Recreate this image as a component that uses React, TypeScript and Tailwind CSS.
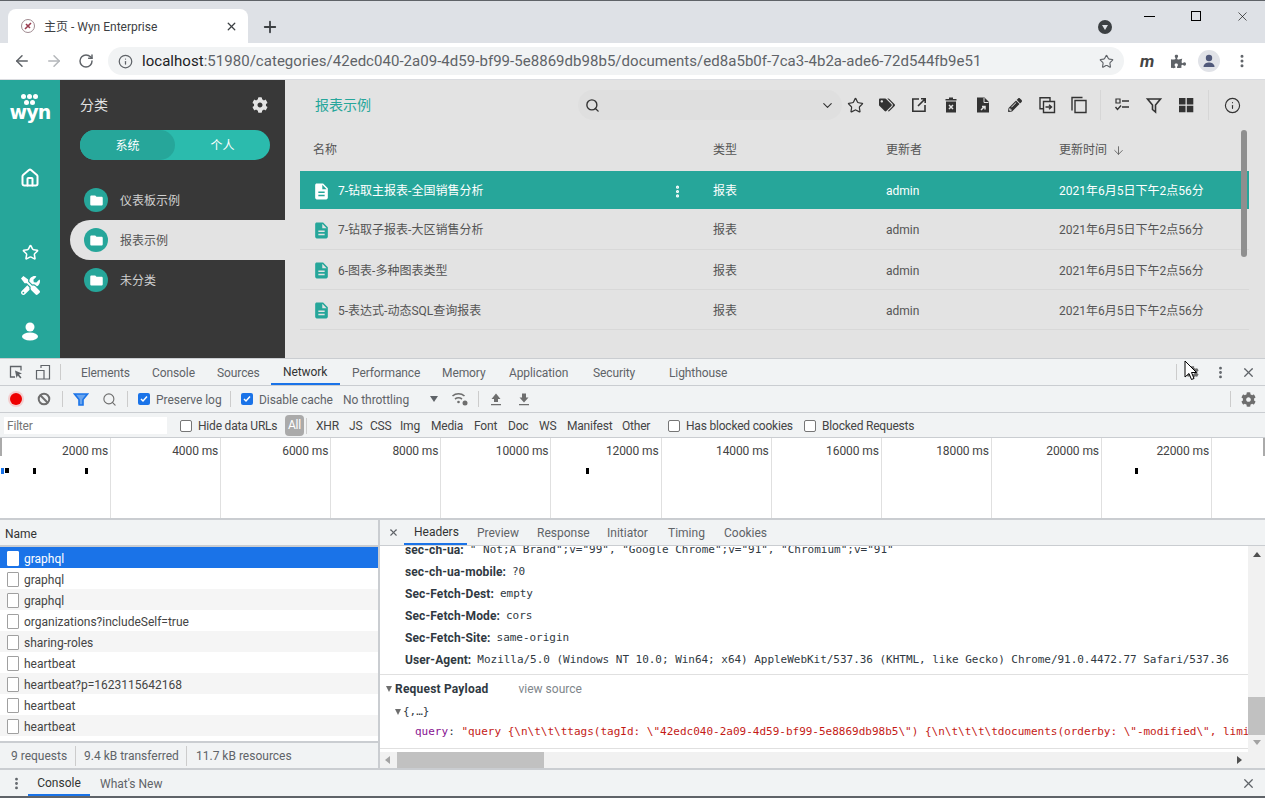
import React from 'react';
import { ArrowDown, ArrowLeft, ArrowRight, ChevronDown, Home, Info, MoreVertical, Plus, RotateCw, Search, Star, X } from 'lucide-react';
import { FaCog, FaPencilAlt, FaPuzzlePiece, FaTags, FaTools } from 'react-icons/fa';
import { MdDescription, MdFolder } from 'react-icons/md';

const SANS = 'font-["Roboto","Noto_Sans_CJK_SC",sans-serif]';
const MONO = 'font-["DejaVu_Sans_Mono",monospace]';

const DOCS = ['7-钻取主报表-全国销售分析', '7-钻取子报表-大区销售分析', '6-图表-多种图表类型', '5-表达式-动态SQL查询报表'];
const FOLDERS = ['仪表板示例', '报表示例', '未分类'];
const DEV_TABS: [string, number][] = [['Elements', 71], ['Console', 65], ['Sources', 66], ['Network', 69], ['Performance', 90], ['Memory', 67], ['Application', 84], ['Security', 76], ['Lighthouse', 90]];
const FILTERS: [string, number][] = [['XHR', 33], ['JS', 21], ['CSS', 30], ['Img', 31], ['Media', 43], ['Font', 34], ['Doc', 31], ['WS', 28], ['Manifest', 55], ['Other', 46]];
const REQUESTS = ['graphql', 'graphql', 'graphql', 'organizations?includeSelf=true', 'sharing-roles', 'heartbeat', 'heartbeat?p=1623115642168', 'heartbeat', 'heartbeat'];
const TIMES = ['2000', '4000', '6000', '8000', '10000', '12000', '14000', '16000', '18000', '20000', '22000'];
const DETAIL_TABS: [string, number][] = [['Headers', 63], ['Preview', 60], ['Response', 70], ['Initiator', 61], ['Timing', 56], ['Cookies', 60]];
const HEADERS: [string, string][] = [
  ['sec-ch-ua-mobile:', '?0'],
  ['Sec-Fetch-Dest:', 'empty'],
  ['Sec-Fetch-Mode:', 'cors'],
  ['Sec-Fetch-Site:', 'same-origin'],
  ['User-Agent:', 'Mozilla/5.0 (Windows NT 10.0; Win64; x64) AppleWebKit/537.36 (KHTML, like Gecko) Chrome/91.0.4472.77 Safari/537.36'],
];

function Glyph({ children, size = 18 }: { children: React.ReactNode; size?: number }) {
  return (
    <svg width={size} height={size} viewBox="0 0 18 18" className="shrink-0">
      {children}
    </svg>
  );
}

function IconBox({ children }: { children: React.ReactNode }) {
  return <span className="w-[32px] flex justify-center items-center shrink-0">{children}</span>;
}

function Checkbox({ on }: { on?: boolean }) {
  if (on) {
    return (
      <span className="w-3 h-3 rounded-[2px] bg-[#1a73e8] flex items-center justify-center shrink-0">
        <svg width="10" height="10" viewBox="0 0 10 10"><path d="M2 5l2 2 4-4.5" fill="none" stroke="#fff" strokeWidth="1.5" /></svg>
      </span>
    );
  }
  return <span className="block w-3 h-3 rounded-[2px] border border-[#767676] bg-white shrink-0" />;
}

function Sep() {
  return <span className="block w-px h-4 bg-[#ccc] shrink-0" />;
}

function TopBar() {
  return (
    <div className="shrink-0 border-t border-[#5f6368]">
      <div className="h-[42px] bg-[#dee1e6] flex items-end pl-[8px] relative">
        <div className="w-[240px] h-[34px] bg-white rounded-t-lg flex items-center pl-[12px] pr-[10px] text-[12px] text-[#3c4043]">
          <svg width="16" height="16" viewBox="0 0 16 16" className="shrink-0">
            <circle cx="8" cy="8" r="6.5" fill="none" stroke="#a08a90" strokeWidth="1" />
            <path d="M5 11l6-6M6 6l4 4" stroke="#9a3c50" strokeWidth="1.6" />
          </svg>
          <span className="ml-[8px] pt-[1px] flex-1">主页 - Wyn Enterprise</span>
          <X size={13} strokeWidth={2.4} className="text-[#3c4043]" />
        </div>
        <Plus size={18} strokeWidth={2.4} className="text-[#3c4043] ml-[13px] mb-[7px]" />
        <div className="flex-1" />
        <div className="w-[14px] h-[14px] rounded-full bg-[#3c4043] flex items-center justify-center mb-[9px] mr-[153px]">
          <span className="border-x-[3.5px] border-x-transparent border-t-[5px] border-t-[#dee1e6]" />
        </div>
        <div className="absolute right-0 top-0 h-[30px] flex items-center text-black">
          <span className="w-[46px] flex justify-center"><span className="w-[11px] h-px bg-black" /></span>
          <span className="w-[47px] flex justify-center"><span className="w-[10px] h-[10px] border border-black" /></span>
          <span className="w-[46px] flex justify-center"><X size={15} strokeWidth={1} /></span>
        </div>
      </div>
      <div className="h-[36px] bg-white flex items-center border-b border-[#dadce0] box-content">
        <ArrowLeft size={18} strokeWidth={2} className="text-[#5f6368] ml-[13px]" />
        <ArrowRight size={18} strokeWidth={2} className="text-[#b4b7ba] ml-[14px]" />
        <RotateCw size={16} strokeWidth={2.2} className="text-[#5f6368] ml-[15px]" />
        <div className="ml-[14px] w-[1016px] h-[28px] bg-[#f1f3f4] rounded-full flex items-center pl-[10px] pr-[10px]">
          <Info size={15} className="text-[#5f6368]" />
          <span className="ml-[9px] text-[15px] text-[#5f6368] whitespace-nowrap tracking-[0.035px]"><span className="text-[#202124]">localhost</span>:51980/categories/42edc040-2a09-4d59-bf99-5e8869db98b5/documents/ed8a5b0f-7ca3-4b2a-ade6-72d544fb9e51</span>
          <div className="flex-1" />
          <Star size={15} strokeWidth={1.8} className="text-[#5f6368]" />
        </div>
        <span className="ml-[16px] w-[16px] text-[17px] font-bold italic text-[#444] leading-none">m</span>
        <FaPuzzlePiece size={15} className="text-[#5f6368] ml-[15px]" />
        <span className="ml-[12px] w-[22px] h-[22px] rounded-full bg-[#e1e3e8] flex items-end justify-center">
          <svg width="16" height="16" viewBox="0 0 16 16" className="mb-[3px]"><circle cx="8" cy="5" r="3.2" fill="#50597a" /><path d="M2.5 14c0-3 3-4.4 5.5-4.4s5.500 1.400 5.500 4.400z" fill="#50597a" /></svg>
        </span>
        <MoreVertical size={16} strokeWidth={2.5} className="text-[#5f6368] ml-[14px]" />
      </div>
    </div>
  );
}

function Rail() {
  return (
    <div className="w-[60px] bg-[#26a69a] flex flex-col items-center text-white shrink-0">
      <div className="mt-[14px] flex flex-col items-center h-[30px]">
        <div className="flex gap-[1px]">
          <span className="w-[5px] h-[5px] rounded-full bg-white" />
          <span className="w-[5px] h-[5px] rounded-full bg-white" />
          <span className="w-[5px] h-[5px] rounded-full bg-white" />
        </div>
        <div className="flex gap-[1px] mt-[1px]">
          <span className="w-[5px] h-[5px] rounded-full bg-white" />
          <span className="w-[5px] h-[5px] rounded-full bg-white" />
        </div>
        <span className="font-['DejaVu_Sans'] font-bold text-[19px] leading-[15px] tracking-[-0.8px]">wyn</span>
      </div>
      <Home size={20} strokeWidth={2.4} className="mt-[44px]" />
      <Star size={17} strokeWidth={2.2} className="mt-[56px]" />
      <FaTools size={19} className="mt-[15px]" />
      <svg width="20" height="20" viewBox="0 0 20 20" className="mt-[26px]"><circle cx="10" cy="6" r="4.500" fill="#fff" /><ellipse cx="10" cy="15.500" rx="8" ry="4" fill="#fff" /></svg>
    </div>
  );
}

function Sidebar() {
  return (
    <div className="w-[225px] bg-[#383838] shrink-0 flex flex-col">
      <div className="h-[50px] pl-[20px] pr-[17px] flex items-center justify-between text-[#e3e3e3] text-[14px]">
        <span>分类</span>
        <FaCog size={16} className="text-[#e3e3e3]" />
      </div>
      <div className="ml-[20px] w-[190px] h-[30px] rounded-full bg-[#2bbbad] flex text-white text-[12px] leading-[32px] text-center">
        <span className="w-[95px] rounded-full bg-[#26a69a]">系统</span>
        <span className="w-[95px]">个人</span>
      </div>
      <div className="mt-[20px] flex flex-col">
        {FOLDERS.map((f, i) => (
          <div key={f} className={`ml-[10px] h-[40px] flex items-center pl-[14px] rounded-l-full text-[12px] ${i === 1 ? 'bg-[#e3e3e3] text-[#555]' : 'text-[#d0d0d0]'}`}>
            <span className="w-[24px] h-[24px] rounded-full bg-[#26a69a] flex items-center justify-center">
              <MdFolder size={15} className="text-white" />
            </span>
            <span className="ml-[12px] pt-[1px]">{f}</span>
          </div>
        ))}
      </div>
    </div>
  );
}

function AppToolbar() {
  const c = '#333';
  return (
    <div className="h-[50px] flex items-center text-[#333]">
      <span className="ml-[30px] w-[263px] text-[14px] text-[#26a69a]">报表示例</span>
      <div className="w-[264px] h-[30px] rounded-full bg-[#dfdfdf] flex items-center pl-[7px] pr-[7px] justify-between">
        <Search size={15} strokeWidth={2.2} className="text-[#333]" />
        <ChevronDown size={15} strokeWidth={1.8} className="text-[#333]" />
      </div>
      <div className="-ml-[3px] flex items-center">
        <IconBox><Star size={17} strokeWidth={1.7} /></IconBox>
        <IconBox><FaTags size={16} color={c} /></IconBox>
        <IconBox><Glyph><path d="M9 3H2.800v12.200H15V9M8 10l7-7M11 2.800h4.200V7" fill="none" stroke={c} strokeWidth="1.600" /></Glyph></IconBox>
        <IconBox><Glyph><path d="M7 1.500h4v1.500h3.500v1.500h-11V3H7zM4 5.500h10v11H4z" fill={c} /><path d="M7 9l4 4M11 9l-4 4" stroke="#e3e3e3" strokeWidth="1.500" /></Glyph></IconBox>
        <IconBox><Glyph><path d="M3 1.500h7.500L15 6v10.500H3z" fill={c} /><path d="M10 2v4.500h4.500" fill="none" stroke="#e3e3e3" /><path d="M7 14l3.500-3.500M8 10.500h3v3" fill="none" stroke="#e3e3e3" strokeWidth="1.500" /></Glyph></IconBox>
        <IconBox><FaPencilAlt size={14} color={c} /></IconBox>
        <IconBox><Glyph><path d="M12 5V1.800H2v11h3M5.500 5.500h11v11h-11zM7.500 11h6M11 8.800l2.500 2.200-2.500 2.200" fill="none" stroke={c} strokeWidth="1.400" /></Glyph></IconBox>
        <IconBox><Glyph><path d="M12.500 1.500H2v13" fill="none" stroke={c} strokeWidth="1.400" /><path d="M5 4.500h11v12H5z" fill="none" stroke={c} strokeWidth="1.400" /></Glyph></IconBox>
      </div>
      <span className="ml-[5px] w-px h-[30px] bg-[#d6d6d6]" />
      <div className="ml-[5px] flex items-center">
        <IconBox><Glyph><path d="M3 3h4v4H3z" fill="none" stroke={c} strokeWidth="1.200" /><path d="M9 5h7M9 11h7M2.500 11l2 2.500L8 9.500" fill="none" stroke={c} strokeWidth="1.400" /></Glyph></IconBox>
        <IconBox><Glyph><path d="M2.500 3h13L10.500 9v7L7.500 13.500V9z" fill="none" stroke={c} strokeWidth="1.600" /></Glyph></IconBox>
        <IconBox><Glyph><path d="M2 2h6.500v6.500H2zM9.800 2h6.500v6.500H9.800zM2 9.800h6.500v6.500H2zM9.800 9.800h6.500v6.500H9.800z" fill={c} /></Glyph></IconBox>
      </div>
      <span className="ml-[6px] w-px h-[30px] bg-[#d6d6d6]" />
      <Info size={17} strokeWidth={1.6} className="ml-[15px]" />
    </div>
  );
}

function DocTable() {
  return (
    <div className="ml-[15px] w-[949px] text-[12px] text-[#555]">
      <div className="h-[40px] grid grid-cols-[413px_173px_173px_190px] items-center">
        <span className="pl-[13px]">名称</span>
        <span>类型</span>
        <span>更新者</span>
        <span className="flex items-center gap-[5px]">更新时间 <ArrowDown size={13} strokeWidth={1.5} /></span>
      </div>
      {DOCS.map((d, i) => (
        <div key={d} className={`grid grid-cols-[413px_173px_173px_190px] items-center pt-[2px] ${i === 0 ? 'bg-[#26a69a] text-white h-[38px] mt-[1px]' : i === 1 ? 'h-[41px] border-b border-[#d8d8d8]' : 'h-[40px] border-b border-[#d8d8d8]'}`}>
          <span className="flex items-center pl-[12px]">
            <MdDescription size={19} className={i === 0 ? 'text-white' : 'text-[#26a69a]'} />
            <span className="ml-[7px] flex-1">{d}</span>
            {i === 0 && <MoreVertical size={15} strokeWidth={3} className="mr-[28px]" />}
          </span>
          <span>报表</span>
          <span>admin</span>
          <span>2021年6月5日下午2点56分</span>
        </div>
      ))}
    </div>
  );
}

function DevTabs() {
  return (
    <div className="h-[27px] bg-[#f1f3f4] border-b border-[#cacdd1] flex items-center text-[12px] text-[#5f6368] tracking-[-0.1px] relative">
      <svg width="16" height="16" viewBox="0 0 16 16" className="ml-[8px]"><path d="M7 13H2.500V2.500h10.500V6.500" fill="none" stroke="#5f6368" strokeWidth="1.300" /><path d="M7 6.500l7 3-3 1 2.500 3-1.200 1-2.500-3-1.300 2.500z" fill="#5f6368" /></svg>
      <svg width="16" height="16" viewBox="0 0 16 16" className="ml-[11px]"><path d="M6 4V1.500h8.500V15H6M1.500 6.500H9V15H1.500z" fill="none" stroke="#5f6368" strokeWidth="1.200" /></svg>
      <span className="w-px h-4 bg-[#ccc] ml-[9px] mr-[8px]" />
      {DEV_TABS.map(([t, w]) => (
        <span key={t} style={{ width: w }} className={`h-full flex items-center pl-3 pt-[2px] shrink-0 ${t === 'Network' ? 'text-[#333] border-b-2 border-[#1a73e8]' : ''}`}>{t}</span>
      ))}
      <div className="flex-1" />
      <Sep />
      <FaCog size={13} className="ml-[9px] text-[#6e6e6e]" />
      <MoreVertical size={15} strokeWidth={2.5} className="ml-[14px]" />
      <X size={15} strokeWidth={2} className="ml-[13px] mr-[9px]" />
    </div>
  );
}

function NetToolbar() {
  return (
    <div className="h-[27px] bg-[#f1f3f4] border-b border-[#cacdd1] flex items-center text-[12px] text-[#5f6368] tracking-[-0.05px]">
      <span className="ml-[10px] w-[12px] h-[12px] rounded-full bg-[#e00] ring-2 ring-[#f5b5b5]/60" />
      <svg width="14" height="14" viewBox="0 0 14 14" className="ml-[15px]"><circle cx="7" cy="7" r="5.300" fill="none" stroke="#6e6e6e" strokeWidth="2" /><path d="M3.300 3.300l7.400 7.400" stroke="#6e6e6e" strokeWidth="2" /></svg>
      <span className="ml-[11px]"><Sep /></span>
      <svg width="16" height="16" viewBox="0 0 16 16" className="ml-[10px]"><path d="M1.500 3h13L10 8.500V14l-4-0V8.500z" fill="#6aa5ee" stroke="#1a73e8" strokeWidth="1.600" /></svg>
      <Search size={15} strokeWidth={1.8} className="ml-[13px] text-[#6e6e6e]" />
      <span className="ml-[10px]"><Sep /></span>
      <span className="ml-[10px]"><Checkbox on /></span>
      <span className="ml-[6px] pt-[1px] w-[74px]">Preserve log</span>
      <Sep />
      <span className="ml-[10px]"><Checkbox on /></span>
      <span className="ml-[6px] pt-[1px] w-[84px]">Disable cache</span>
      <span className="w-[87px] pt-[1px]">No throttling</span>
      <span className="border-x-[4px] border-x-transparent border-t-[6px] border-t-[#5f6368]" />
      <svg width="18" height="16" viewBox="0 0 18 16" className="ml-[13px]"><path d="M1.500 5a9 9 0 0 1 12 0M4 8a6 6 0 0 1 7 0" fill="none" stroke="#6e6e6e" strokeWidth="1.600" /><circle cx="7.500" cy="11" r="1.300" fill="#6e6e6e" /><circle cx="14" cy="12" r="2.500" fill="#6e6e6e" /></svg>
      <span className="ml-[9px]"><Sep /></span>
      <svg width="14" height="14" viewBox="0 0 14 14" className="ml-[10px]"><path d="M7 1.500L11.500 7H9v3H5V7H2.500zM2 12h10v1.200H2z" fill="#6e6e6e" /></svg>
      <svg width="14" height="14" viewBox="0 0 14 14" className="ml-[14px]"><path d="M7 10.500L2.500 5.500H5V1.500h4v4h2.500zM2 12h10v1.200H2z" fill="#6e6e6e" /></svg>
      <div className="flex-1" />
      <Sep />
      <FaCog size={15} className="ml-[10px] mr-[9px] text-[#6e6e6e]" />
    </div>
  );
}

function FilterBar() {
  return (
    <div className="h-[25px] bg-[#f1f3f4] border-b border-[#cacdd1] flex items-center text-[12px] text-[#444] whitespace-nowrap tracking-[-0.2px] pt-[1px]">
      <span className="ml-[4px] w-[163px] h-[17px] bg-white pl-[3px] leading-[18px] text-[#757575]">Filter</span>
      <span className="ml-[13px]"><Checkbox /></span>
      <span className="ml-[6px] w-[87px]">Hide data URLs</span>
      <span className="w-[19px] h-[21px] rounded-[4px] bg-[#aaa] text-white text-center leading-[21px] mr-[2px]">All</span>
      <span className="w-px h-4 bg-[#ccc] mr-[9px]" />
      {FILTERS.map(([t, w]) => (
        <span key={t} style={{ width: w }} className="shrink-0">{t}</span>
      ))}
      <Checkbox />
      <span className="ml-[6px] w-[118px]">Has blocked cookies</span>
      <Checkbox />
      <span className="ml-[6px]">Blocked Requests</span>
    </div>
  );
}

function Overview() {
  return (
    <div className="h-[82px] bg-white border-b-2 border-[#cacdd1] flex pl-[1px] relative text-[12px] text-[#444]">
      {TIMES.map(t => (
        <div key={t} className="w-[110.100px] shrink-0 border-r border-[#e0e0e0] text-right pr-[2px] pt-[5px] leading-[16px] tracking-[-0.1px]">{t} ms</div>
      ))}
      <span className="absolute left-0 top-0 w-[2px] h-[18px] bg-[#aaa]" />
      <span className="absolute right-0 top-0 w-[2px] h-[18px] bg-[#aaa]" />
      <span className="absolute left-[1px] top-[30px] w-[3px] h-[6px] bg-[#1a73e8]" />
      <span className="absolute left-[5px] top-[30px] w-[4px] h-[5px] bg-black" />
      {[33, 85, 586, 1135].map(x => (
        <span key={x} style={{ left: x }} className="absolute top-[30px] w-[3px] h-[6px] bg-black" />
      ))}
    </div>
  );
}

function RequestList() {
  return (
    <div className="w-[380px] shrink-0 border-r-2 border-[#cacdd1] flex flex-col text-[12px] text-[#444]">
      <div className="h-[27px] bg-[#f1f3f4] border-b-2 border-[#cacdd1] pl-[5px] pt-[2px] flex items-center text-[#333] shrink-0">Name</div>
      <div className="flex-1 bg-white">
        {REQUESTS.map((r, i) => (
          <div key={i} className={`h-[21px] flex items-center pl-[7px] pt-[1px] ${i === 0 ? 'bg-[#1a73e8] text-white' : i % 2 === 0 ? 'bg-[#f5f5f5]' : 'bg-white'}`}>
            <span className={`w-[12px] h-[15px] border rounded-[1px] shrink-0 ${i === 0 ? 'bg-white border-white' : 'bg-white border-[#a0a0a0]'}`} />
            <span className="ml-[5px] pt-[1px]">{r}</span>
          </div>
        ))}
      </div>
      <div className="h-[27px] bg-[#f1f3f4] border-t-2 border-[#cacdd1] flex items-center text-[#5f6368] shrink-0">
        <span className="ml-[11px] w-[64px]">9 requests</span>
        <span className="w-px h-5 bg-[#ccc]" />
        <span className="ml-[8px] w-[102px]">9.4 kB transferred</span>
        <span className="w-px h-5 bg-[#ccc]" />
        <span className="ml-[9px]">11.7 kB resources</span>
      </div>
    </div>
  );
}

function DetailPanel() {
  return (
    <div className="flex-1 min-w-0 flex flex-col text-[12px]">
      <div className="h-[26px] bg-[#f1f3f4] border-b border-[#cacdd1] flex items-center text-[#5f6368] shrink-0">
        <X size={11} strokeWidth={2.4} className="ml-[8px] mr-[5px]" />
        {DETAIL_TABS.map(([t, w]) => (
          <span key={t} style={{ width: w }} className={`h-full flex items-center pl-[10px] pt-[1px] shrink-0 ${t === 'Headers' ? 'text-[#333] border-b-2 border-[#1a73e8]' : ''}`}>{t}</span>
        ))}
      </div>
      <div className="flex-1 min-h-0 flex">
        <div className="w-[868px] bg-white overflow-hidden flex flex-col">
          <div className="h-[129px] pl-[25px] overflow-hidden border-b border-[#e0e0e0] shrink-0 whitespace-nowrap text-[#303942]">
            <div className="h-[22px] -mt-[7px] flex items-center">
              <b className="font-bold mr-[6px] tracking-[0.1px]">sec-ch-ua:</b>
              <span className={`${MONO} text-[11px]`}>&quot; Not;A Brand&quot;;v=&quot;99&quot;, &quot;Google Chrome&quot;;v=&quot;91&quot;, &quot;Chromium&quot;;v=&quot;91&quot;</span>
            </div>
            {HEADERS.map(([k, v]) => (
              <div key={k} className="h-[22px] flex items-center">
                <b className="font-bold mr-[6px] tracking-[0.1px]">{k}</b>
                <span className={`${MONO} text-[11px] tracking-[-0.03px]`}>{v}</span>
              </div>
            ))}
          </div>
          <div className="h-[74px] border-b border-[#e0e0e0] shrink-0 whitespace-nowrap overflow-hidden">
            <div className="h-[28px] flex items-center pl-[6px] text-[#303942]">
              <span className="border-x-[3.500px] border-x-transparent border-t-[6px] border-t-[#6e6e6e]" />
              <b className="font-bold ml-[3px] tracking-[0.2px]">Request Payload</b>
              <span className="ml-[30px] text-[#80868b]">view source</span>
            </div>
            <div className={`h-[18px] flex items-center pl-[15px] ${MONO} text-[11px] text-[#303942]`}>
              <span className="border-x-[3.500px] border-x-transparent border-t-[6px] border-t-[#6e6e6e] mr-[2px]" />
              {'{,…}'}
            </div>
            <div className={`h-[22px] flex items-center pl-[35px] ${MONO} text-[11px]`}>
              <span className="text-[#881391]">query</span>
              <span className="text-[#303942]">:&nbsp;</span>
              <span className="text-[#c41a16]">{'"query {\\n\\t\\t\\ttags(tagId: \\"42edc040-2a09-4d59-bf99-5e8869db98b5\\") {\\n\\t\\t\\t\\tdocuments(orderby: \\"-modified\\", limit'}</span>
            </div>
          </div>
          <div className="h-[3px] bg-white shrink-0" />
          <div className="flex-1 bg-[#f1f1f1] flex items-center relative">
            <span className="ml-[5px] border-y-[4px] border-y-transparent border-r-[5px] border-r-[#a3a3a3]" />
            <span className="ml-[7px] w-[147px] h-full bg-[#c1c1c1]" />
            <div className="flex-1" />
            <span className="mr-[6px] border-y-[4px] border-y-transparent border-l-[5px] border-l-[#505050]" />
          </div>
        </div>
        <div className="flex-1 bg-[#f1f1f1] flex flex-col items-center pt-[6px] pb-[3px]">
          <span className="border-x-[4px] border-x-transparent border-b-[5px] border-b-[#505050]" />
          <div className="flex-1" />
          <span className="w-full h-[38px] bg-[#c1c1c1]" />
          <span className="mt-[5px] mb-[20px] border-x-[4px] border-x-transparent border-t-[5px] border-t-[#a3a3a3]" />
        </div>
      </div>
    </div>
  );
}

function Drawer() {
  return (
    <div className="h-[30px] bg-[#f1f3f4] border-t-2 border-b-2 border-t-[#cacdd1] border-b-[#5f6368] flex items-center text-[12px] text-[#5f6368] shrink-0">
      <MoreVertical size={15} strokeWidth={2.5} className="ml-[9px]" />
      <span className="ml-[4px] w-[62px] h-full flex items-center justify-center pt-[2px] text-[#333] border-b-2 border-[#1a73e8]">Console</span>
      <span className="ml-[10px] pt-[2px]">What&apos;s New</span>
      <div className="flex-1" />
      <X size={15} strokeWidth={2} className="mr-[9px]" />
    </div>
  );
}

export default function App() {
  return (
    <div className={`w-[1265px] h-[798px] overflow-hidden flex flex-col relative bg-white ${SANS}`}>
      <TopBar />
      <div className="h-[278px] flex shrink-0 bg-[#e3e3e3]">
        <Rail />
        <Sidebar />
        <div className="flex-1 min-w-0 relative">
          <AppToolbar />
          <DocTable />
          <span className="absolute left-[956px] top-[50px] w-[6px] h-[127px] rounded-full bg-[#8f8f8f]" />
        </div>
      </div>
      <div className="flex-1 min-h-0 flex flex-col border-t border-[#cacdd1]">
        <DevTabs />
        <NetToolbar />
        <FilterBar />
        <Overview />
        <div className="flex-1 min-h-0 flex">
          <RequestList />
          <DetailPanel />
        </div>
        <Drawer />
      </div>
      {/* mouse pointer over the devtools bar */}
      <svg width="16" height="22" viewBox="0 0 16 22" className="absolute left-[1184px] top-[360px]">
        <path d="M1 1v16l4-3.500 2.500 6 2.500-1-2.500-6h5z" fill="#fff" stroke="#000" strokeWidth="1" />
      </svg>
    </div>
  );
}
